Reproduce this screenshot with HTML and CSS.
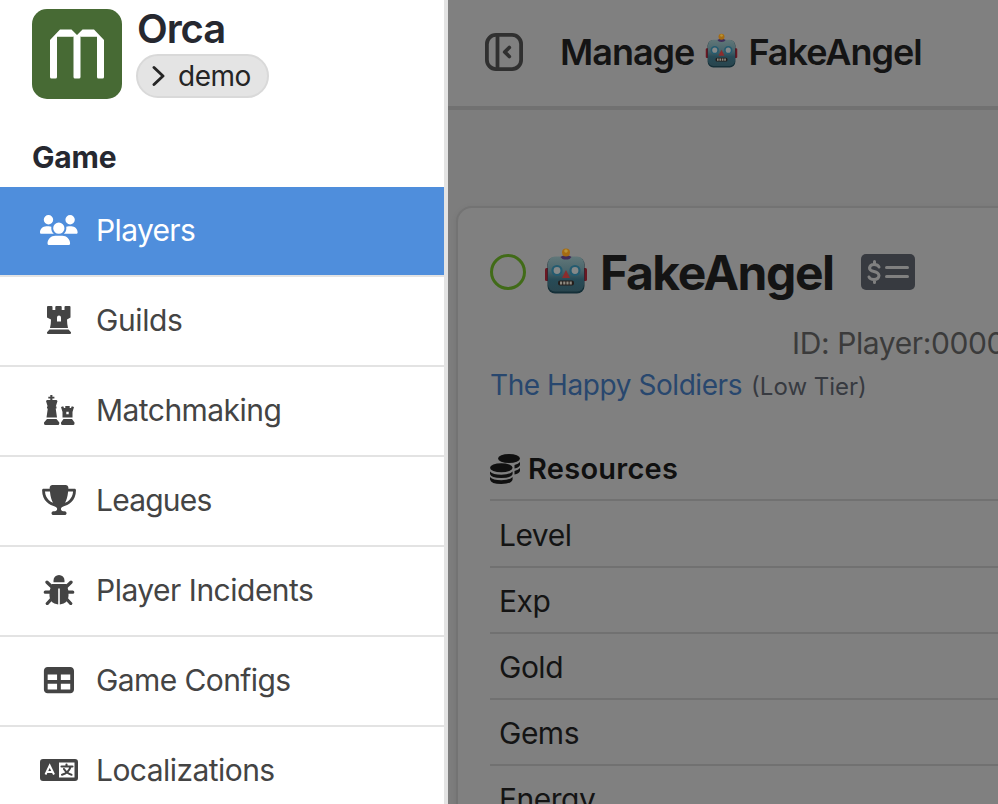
FILE: index.html
```
<!DOCTYPE html>
<html lang="en">
<head>
<meta charset="utf-8">
<title>Orca</title>
<link rel="stylesheet" href="styles.css">
</head>
<body>
<svg class="defs" width="0" height="0">
  <defs>
    <linearGradient id="face" x1="0" y1="0" x2="0" y2="1">
      <stop offset="0" stop-color="#617779"/><stop offset=".4" stop-color="#4a666c"/><stop offset=".65" stop-color="#274b57"/><stop offset="1" stop-color="#29454e"/>
    </linearGradient>
    <symbol id="robot" viewBox="0 0 44 46">
      <rect x="1" y="20" width="5" height="13" rx="1.5" fill="#6b1722"/><rect x="38" y="20" width="5" height="13" rx="1.5" fill="#6b1722"/>
      <rect x="3.500" y="9" width="37" height="36.500" rx="7.500" fill="#142f38"/>
      <rect x="4" y="8.500" width="36" height="35" rx="7" fill="url(#face)"/>
      <path d="M16.500 9q5.500-4 11 0l-2 2q-3.500 1-7 0z" fill="#402c59"/>
      <circle cx="22" cy="4.500" r="4" fill="#a56b13"/><circle cx="22" cy="3" r="1.800" fill="#b99335"/>
      <circle cx="13" cy="22.500" r="4.500" fill="#858989" stroke="#235b70" stroke-width="2.200"/>
      <circle cx="31" cy="22.500" r="4.500" fill="#858989" stroke="#235b70" stroke-width="2.200"/>
      <path d="M22 22l4 8h-8z" fill="#8b2d2d"/>
      <rect x="14" y="32.500" width="16" height="5" rx="2" fill="#241d1b"/>
      <path d="M16 35h12" stroke="#8d8a80" stroke-width="3" stroke-dasharray="2.200 1"/>
    </symbol>
  </defs>
</svg>
<div class="app">
  <aside class="sidebar">
    <header class="brand">
      <svg class="logo" viewBox="0 0 90 90"><rect width="90" height="90" rx="15" fill="#476a34"/><path d="M18 68V31L28 20.500h11.500l5.500 5.500 5.500-5.500H62L72 31v37q0 1.500-1.500 1.500h-4Q65 69.500 65 68V27.500H48.500V68q0 1.500-1.500 1.500h-4q-1.500 0-1.500-1.500V27.500H25V68q0 1.500-1.500 1.500h-4Q18 69.500 18 68z" fill="#fff"/><path d="M25 27.500h16.500M48.500 27.500H65" stroke="#d5decf"/></svg>
      <div class="brand-text">
        <div class="name"><span>Orca</span></div>
        <div class="env"><svg width="14" height="22" viewBox="0 0 14 22"><path d="M2 2.500 11 11 2 19.500" fill="none" stroke="#252525" stroke-width="2.900" stroke-linecap="round" stroke-linejoin="round"/></svg><span>demo</span></div>
      </div>
    </header>
    <h2 class="group">Game</h2>
    <nav>
      <a class="item active"><svg class="icon" viewBox="0 0 38 30"><path transform="scale(.0588)" d="M144 0a80 80 0 1 1 0 160A80 80 0 1 1 144 0zM512 0a80 80 0 1 1 0 160A80 80 0 1 1 512 0zM0 298.700C0 239.800 47.800 192 106.700 192h42.700c15.900 0 31 3.500 44.600 9.700c-1.300 7.200-1.900 14.700-1.900 22.300c0 38.200 16.800 72.500 43.300 96H21.300C9.600 320 0 310.400 0 298.700zM405.300 320c26-23.500 42.600-57.800 42.600-96c0-7.600-.7-15-1.900-22.300c13.600-6.300 28.700-9.700 44.600-9.700h42.700C592.200 192 640 239.800 640 298.700c0 11.800-9.600 21.300-21.300 21.300H405.300zM224 224a96 96 0 1 1 192 0 96 96 0 1 1-192 0zM128 485.300C128 411.700 187.700 352 261.300 352H378.700C452.300 352 512 411.700 512 485.300c0 14.700-11.900 26.700-26.700 26.700H154.700c-14.700 0-26.700-11.900-26.700-26.700z"/></svg><span class="t-players">Players</span></a>
      <a class="item"><svg class="icon" viewBox="0 0 38 30"><path fill-rule="evenodd" d="M7 2q0-1 1-1h3.500q1 0 1 1v3h2.800V2q0-1 1-1h4.400q1 0 1 1v3h2.800V2q0-1 1-1H29.500q1 0 1 1v10.500L27 14.500q0 4 1 8.500H10q1-4.500 1-8.500l-4-2zM17 16.500h4V12.500a2 2 0 0 0-4 0zM9.500 24.500h19l2.500 2.700V28q0 1-1 1H8q-1 0-1-1v-.8z"/></svg><span class="t-guilds">Guilds</span></a>
      <a class="item"><svg class="icon" viewBox="0 0 38 30"><path d="M10.300 0h2.100v1.700h2v1.900h-2V5h4.100l1 1-1.700 5.500h.7v2H15.700l1.300 9H6.500l1.300-9H7v-2h.7L6 6l1-1h3.300V3.600h-2V1.700h2zM7 24h9.500l2.800 3.500v1q0 1.500-1.500 1.500H5.700Q4 30 4 28.500v-1z"/><path fill-rule="evenodd" d="M21 12l2.200-.7.8 1.700h1.300v-2h4.400v2H31l.8-1.700 2.200.7-1.500 5v5.500h-10V17zM26.300 19.300h2.400v-2.500h-2.400zM23.500 24h8.500l2.500 3.500v1q0 1.500-1.500 1.500H22.500Q21 30 21 28.500v-1z"/></svg><span class="t-match">Matchmaking</span></a>
      <a class="item"><svg class="icon" viewBox="0 0 38 30"><path transform="translate(2.100) scale(.0588)" d="M400 0H176c-26.500 0-48.100 21.800-47.100 48.200c.2 5.300.4 10.600.7 15.800H24C10.700 64 0 74.700 0 88c0 92.600 33.500 157 78.500 200.700c44.300 43.100 98.300 64.800 138.100 75.800c23.400 6.500 39.400 26 39.400 45.600c0 20.900-17 37.900-37.900 37.900H192c-17.700 0-32 14.300-32 32s14.300 32 32 32H384c17.700 0 32-14.300 32-32s-14.300-32-32-32H357.900C337 448 320 431 320 410.100c0-19.600 15.900-39.200 39.400-45.600c39.900-11 93.900-32.700 138.200-75.800C542.500 245 576 180.600 576 88c0-13.300-10.700-24-24-24H446.400c.3-5.200.5-10.400.7-15.800C448.100 21.800 426.500 0 400 0zM48.900 112h84.400c9.100 90.100 29.200 150.300 51.900 190.600c-24.900-11-50.800-26.500-73.200-48.300c-32-31.100-58-76-63-142.300zM464.100 254.300c-22.400 21.800-48.300 37.300-73.200 48.300c22.700-40.300 42.800-100.500 51.900-190.600h84.400c-5.100 66.300-31.100 111.200-63 142.300z"/></svg><span class="t-leagues">Leagues</span></a>
      <a class="item"><svg class="icon" viewBox="0 0 38 30"><path d="M13.500 7.300V5.500a5.500 5.500 0 0 1 11 0v1.800zM12 9h14.500l2 7v5q0 7-8.700 8.500V13.500h-1.600v16Q9.500 28 9.500 21v-5z"/><path d="M7 7.200l5.500 5.300M31 7.200l-5.500 5.300M5.300 17.200h7M32.700 17.200h-7M7.300 28.500l5.500-6M30.700 28.500l-5.500-6" fill="none" stroke="#444" stroke-width="3.300" stroke-linecap="round"/></svg><span class="t-incidents">Player Incidents</span></a>
      <a class="item"><svg class="icon" viewBox="0 0 38 30"><path transform="translate(3.900 0) scale(.0588)" d="M64 256V160H224v96H64zm0 64H224v96H64V320zm224 96V320H448v96H288zM448 256H288V160H448v96zM64 32C28.700 32 0 60.700 0 96V416c0 35.300 28.700 64 64 64H448c35.300 0 64-28.700 64-64V96c0-35.300-28.700-64-64-64H64z"/></svg><span class="t-configs">Game Configs</span></a>
      <a class="item"><svg class="icon" viewBox="0 0 38 30"><path fill-rule="evenodd" d="M3 4h32a3 3 0 0 1 3 3v16a3 3 0 0 1-3 3H3a3 3 0 0 1-3-3V7a3 3 0 0 1 3-3zM19 7.500v15h15.500v-15z"/><path d="M5.500 19.500 9.700 10.500 14 19.500M7 17h5.500" fill="none" stroke="#fff" stroke-width="2"/><path d="M21.500 11.500h11M26.500 9.500v2M30.500 12q-2 6-8.500 7.700M24 14q3 4.700 7.500 5.700" fill="none" stroke="#444" stroke-width="2.100" stroke-linecap="round"/></svg><span class="t-local">Localizations</span></a>
    </nav>
  </aside>
  <main class="main">
    <header class="topbar">
      <svg class="toggle" viewBox="0 0 38 38"><rect x="1.900" y="1.900" width="34.200" height="34.200" rx="9" fill="none" stroke="#303030" stroke-width="3.800"/><path d="M12.500 2v34" stroke="#303030" stroke-width="3.800"/><path d="M24.300 14.500 19.700 19l4.600 4.500" fill="none" stroke="#303030" stroke-width="3.700" stroke-linecap="round" stroke-linejoin="round"/></svg>
      <h1><span class="t-manage">Manage</span><svg class="bot-small"><use href="#robot"/></svg><span class="t-angel">FakeAngel</span></h1>
    </header>
    <section class="card">
      <div class="player">
        <span class="ring"></span>
        <svg class="bot"><use href="#robot"/></svg>
        <span class="t-title">FakeAngel</span>
        <svg class="money" viewBox="0 0 54 36"><rect width="54" height="36" rx="5" fill="#373a40"/><path d="M18 13q-1-2.500-5-2.500t-4.500 3.500q0 2.500 4.500 3.500t5 4q-.5 4-5 4-4 0-5-2.500M13.500 7.500v3M13.500 25.500v3" fill="none" stroke="#808080" stroke-width="3" stroke-linecap="round"/><path d="M25.500 13.500h21M25.500 22.500h21" stroke="#808080" stroke-width="3" stroke-linecap="round"/></svg>
      </div>
      <div class="id"><span class="t-id">ID: Player:0000000000</span></div>
      <div class="guild"><a class="t-guild">The Happy Soldiers</a><small class="t-tier">(Low Tier)</small></div>
      <h3 class="resources"><svg viewBox="0 0 30 30"><ellipse cx="19" cy="4.500" rx="11" ry="4.500"/><path d="M24.500 11q4-1 5.500-3v3q-1 2.500-5.500 3.500zM24.500 17q4-1 5.500-3v3q-1 2.500-5.500 3.500z"/><ellipse cx="11.300" cy="13.800" rx="11.300" ry="4.500"/><path d="M0 17.500q3 3.200 11.300 3.200t11.300-3.200V20q-1 4-11.300 4T0 20zM0 23q3 3.200 11.300 3.200T22.600 23v2.500Q21.600 30 11.300 30T0 25.500z"/></svg><span class="t-resources">Resources</span></h3>
      <ul class="rows">
        <li><span class="t-level">Level</span></li><li><span class="t-exp">Exp</span></li><li><span class="t-gold">Gold</span></li><li><span class="t-gems">Gems</span></li><li><span class="t-energy">Energy</span></li>
      </ul>
    </section>
  </main>
</div>
</body>
</html>
```
FILE: styles.css
```
* { box-sizing: border-box; }
body { margin: 0; overflow: hidden; font-family: Inter, "Liberation Sans", sans-serif; }
h1, h2, h3, ul { margin: 0; padding: 0; }
svg { display: block; flex: none; }
.defs { position: absolute; }
.app { display: flex; width: 998px; height: 804px; overflow: hidden; white-space: nowrap; }
.sidebar { flex: none; width: 448px; height: 804px; border-right: 4px solid #e3e3e3; background: #fff; overflow: hidden; }
.brand { display: flex; gap: 14px; height: 140px; padding: 9px 0 0 32px; }
.logo { width: 90px; height: 90px; }
.name { height: 45px; padding-left: 1px; font-size: 40px; line-height: 40px; font-weight: 600; letter-spacing: -1.100px; color: #262830; }
.env { display: flex; align-items: center; gap: 12px; width: 133px; height: 44px; padding-left: 14px; border: 2px solid #d9d9d9; border-radius: 22px; background: #e4e4e4; color: #252525; font-size: 28px; letter-spacing: -.5px; }
.group { height: 47px; padding-left: 32px; font-size: 30px; line-height: 35px; font-weight: 700; letter-spacing: -.200px; color: #262830; }
.item { display: flex; align-items: center; gap: 18px; height: 90px; padding: 0 0 2px 40px; border-bottom: 2px solid #e3e3e3; font-size: 30px; letter-spacing: -.4px; color: #444; }
.item.active { background: #4f8edc; color: #fff; }
.icon { width: 38px; height: 30px; fill: currentColor; }
.t-players { letter-spacing: -.650px; }
.t-match { letter-spacing: -.550px; }
.t-leagues { letter-spacing: -.800px; }
.t-incidents { letter-spacing: -.500px; }
.t-configs { letter-spacing: -.600px; }
.t-local { letter-spacing: -.550px; }
.main { flex: 1; min-width: 0; height: 804px; overflow: hidden; background: #7d7d7d; color: #141414; }
.topbar { display: flex; align-items: center; gap: 37px; height: 110px; padding: 0 0 2px 37px; border-bottom: 4px solid #717171; background: #808080; }
.toggle { width: 38px; height: 38px; }
.topbar h1 { display: flex; align-items: center; font-size: 36px; line-height: 44px; font-weight: 600; letter-spacing: -1px; }
.bot-small { width: 33px; height: 35px; margin: -4px 10px 0 11px; }
.card { width: 700px; height: 620px; margin: 96px 0 0 8px; padding: 37px 0 0 32px; border: 2px solid #737373; border-radius: 16px; background: #808080; box-shadow: 0 2px 6px rgba(0, 0, 0, .08); }
.player { display: flex; align-items: center; height: 54px; font-size: 48px; line-height: 54px; font-weight: 700; letter-spacing: -1.450px; }
.t-title { padding-top: 2px; }
.ring { width: 36px; height: 36px; border: 3.500px solid #416b18; border-radius: 50%; }
.bot { width: 44px; height: 46px; margin: -2px 12px 0 18px; }
.money { width: 54px; height: 36px; margin-left: 27px; }
.id { height: 44px; margin-top: 22px; padding-left: 302px; font-size: 30px; line-height: 44px; letter-spacing: -.4px; color: #3b3b3b; }
.guild { display: flex; align-items: baseline; gap: 9px; height: 40px; font-size: 28px; line-height: 40px; letter-spacing: -.430px; color: #28476e; }
.guild small { font-size: 24px; letter-spacing: 0; color: #373a40; }
.resources { display: flex; align-items: center; gap: 8px; height: 47px; margin-top: 40px; font-size: 29px; font-weight: 600; letter-spacing: .250px; color: #101010; }
.resources svg { width: 30px; height: 30px; fill: #101010; }
.rows { margin-top: 7px; list-style: none; }
.rows li { height: 66px; padding: 1px 0 0 9px; border-top: 2px solid #717171; font-size: 30px; line-height: 64px; letter-spacing: -.5px; }
.rows li:first-child { height: 67px; padding-top: 2px; }
```
